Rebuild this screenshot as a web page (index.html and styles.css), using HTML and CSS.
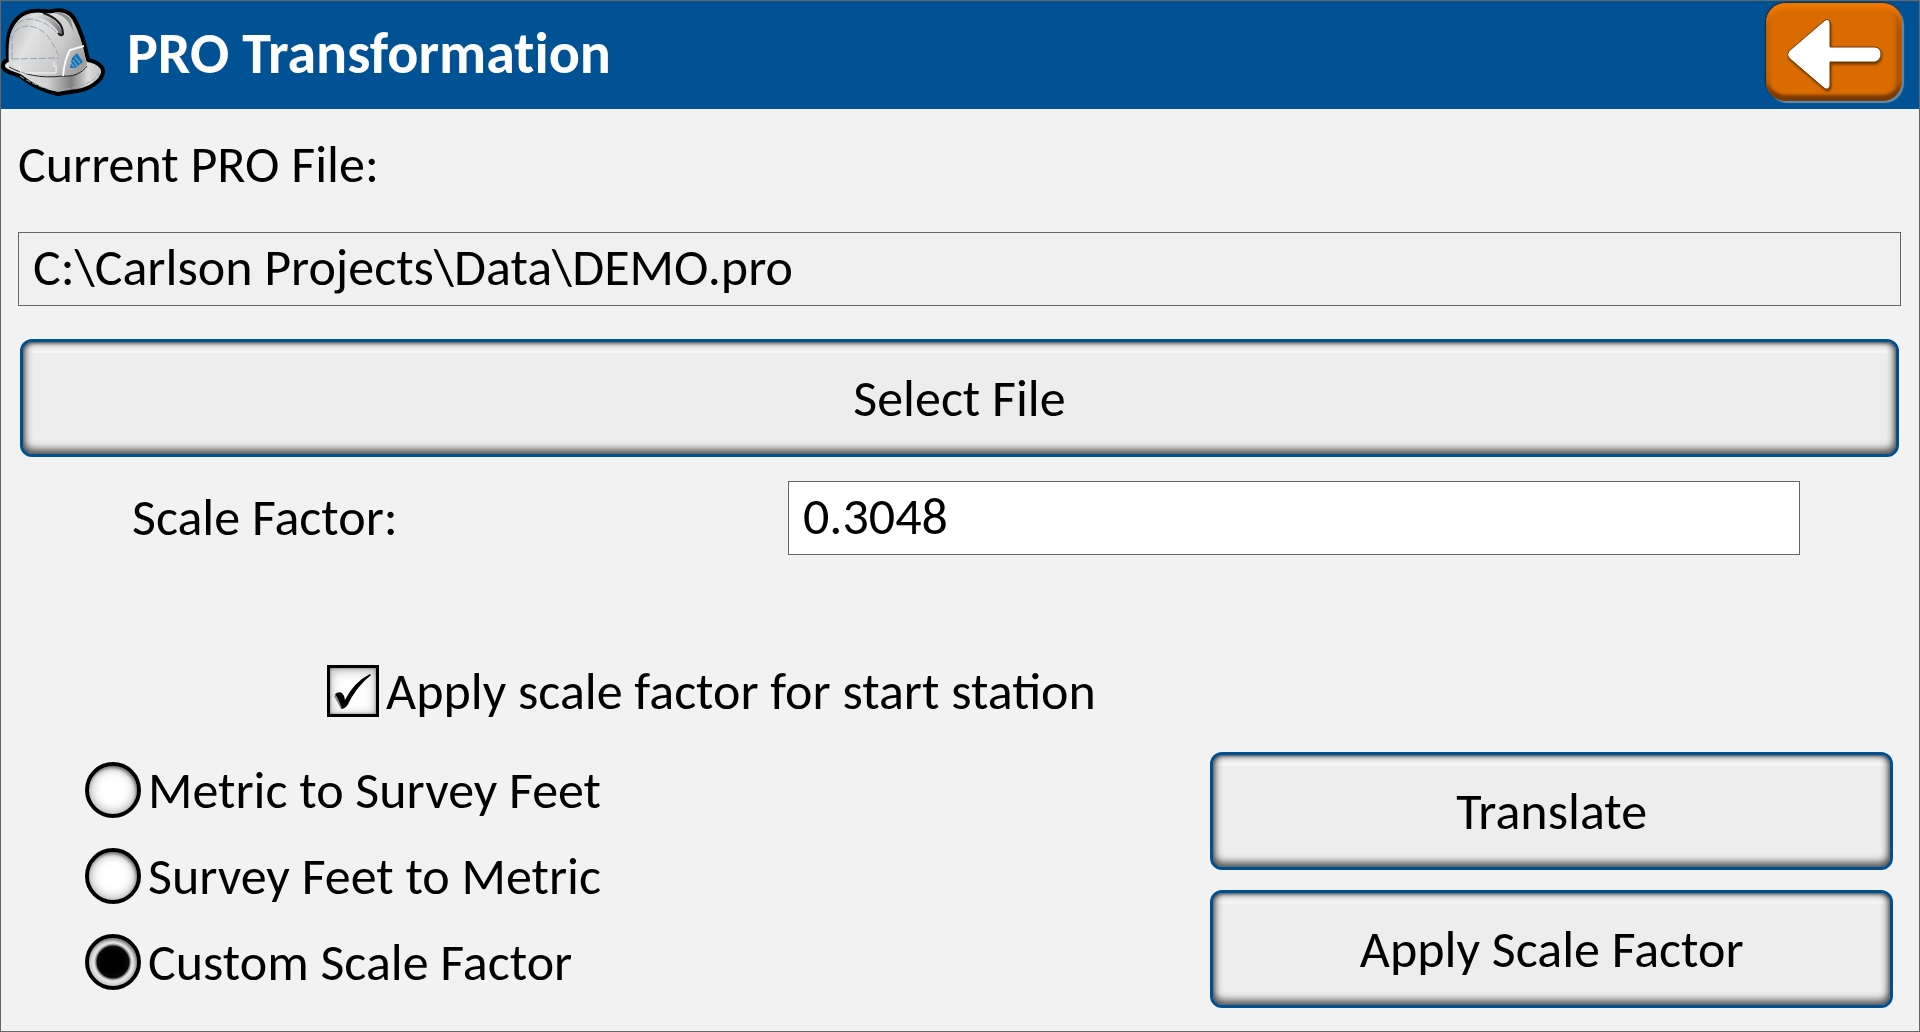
FILE: index.html
```html
<!DOCTYPE html>
<html lang="en">
<head>
<meta charset="utf-8">
<meta name="viewport" content="width=device-width, initial-scale=1">
<title>PRO Transformation</title>
<link rel="stylesheet" href="styles.css">
</head>
<body>
<div class="window">
  <header class="titlebar">
    <svg class="helmet" viewBox="1 3 106 100" aria-hidden="true">
      <defs>
        <linearGradient id="shell" x1="0" y1="0.2" x2="1" y2="0.6">
          <stop offset="0" stop-color="#b4b4b4"/>
          <stop offset="0.3" stop-color="#e2e2e2"/>
          <stop offset="0.7" stop-color="#cacaca"/>
          <stop offset="1" stop-color="#a0a0a0"/>
        </linearGradient>
        <linearGradient id="brim" x1="0" y1="0" x2="1" y2="0">
          <stop offset="0" stop-color="#e6e6e6"/>
          <stop offset="0.45" stop-color="#d0d0d0"/>
          <stop offset="0.68" stop-color="#808080"/>
          <stop offset="0.85" stop-color="#dcdcdc"/>
          <stop offset="1" stop-color="#bdbdbd"/>
        </linearGradient>
        <linearGradient id="ridge" x1="0" y1="0" x2="1" y2="1">
          <stop offset="0" stop-color="#eeeeee"/>
          <stop offset="0.5" stop-color="#a8a8a8"/>
          <stop offset="1" stop-color="#5e5e5e"/>
        </linearGradient>
      </defs>
      <path d="M8 60C7 44 7 29 17 19C24 11 33 10 43 11Q48 12 52 11C61 9 69 11 74 18C80 29 85 44 88 60C98 62 104 67 103 73C101 82 89 89 77 91C69 92 64 93 58 94C42 91 30 84 20 76C12 73 3 71 3 66C3 63 5 61 8 60Z" fill="url(#brim)" stroke="#000" stroke-width="4" stroke-linejoin="round"/>
      <path d="M9 66C8 46 8 31 18 21C24 14 32 12 42 13Q49 14 54 13C61 12 68 13 72 20C79 32 83 48 87 64C82 73 73 77 63 76C44 79 20 74 9 66Z" fill="url(#shell)"/>
      <path d="M34 14C48 13 59 21 64 35Q61 38 59 33C54 23 42 16 29 17Z" fill="url(#ridge)"/>
      <path d="M43 13C55 17 63 24 63 34Q61 37 58 33" fill="none" stroke="#191919" stroke-width="2"/>
      <path d="M54 13C65 15 70 23 74 33L71 20C67 14 60 12 54 13Z" fill="#8d8d8d"/>
      <path d="M10 39C12 22 25 17 36 20C45 22 51 27 57 33M12 59V38C14 28 25 24 34 27C47 31 53 43 59 56M12 59L59 58" fill="none" stroke="#8fa6ba" stroke-width="1" stroke-dasharray="7 2"/>
      <path d="M9 67C22 74 41 79 62 76C74 77 82 73 87 66" fill="none" stroke="#222" stroke-width="1"/>
      <path d="M20 76C34 85 45 89 57 91C75 88 94 84 99 73" fill="none" stroke="#9aabb8" stroke-width="1" stroke-dasharray="5 2"/>
      <path d="M63 76C64 65 66 57 70 50L84 46" fill="none" stroke="#fafafa" stroke-width="2"/>
      <path d="M19 66L21 73H56V65M54 62V67" fill="none" stroke="#f8f8f8" stroke-width="1"/>
      <path d="M77 53L83 62L75 68H70L72 58Z" fill="#1276b9"/>
      <path d="M75 57L80 63M73 60L77 66M71 63L74 67" stroke="#c3d7e3" stroke-width="0.7"/>
    </svg>
    <h1 class="title">PRO Transformation</h1>
    <button class="back" type="button" aria-label="Back">
      <svg class="arrow" viewBox="0 0 94 72" aria-hidden="true">
        <path d="M2 33L37 3Q42 -1 43 5V29H88Q94 30 94 36T88 44H43V68Q41 73 37 70L2 40Q-1 37 2 33Z" fill="#fff" stroke="#733900" stroke-width="1"/>
      </svg>
    </button>
  </header>

  <main class="form">
    <div class="file">
      <label class="text" for="path">Current PRO File:</label>
      <input class="field field-path" id="path" type="text" value="C:\Carlson Projects\Data\DEMO.pro" readonly>
      <div class="select"><button class="button" type="button">Select File</button></div>
    </div>

    <div class="scale">
      <label class="text" for="factor">Scale Factor:</label>
      <input class="field" id="factor" type="text" value="0.3048">
    </div>

    <label class="option option-start">
      <span class="tick">
        <input class="box" type="checkbox" checked>
        <svg class="mark" viewBox="0 0 52 52" aria-hidden="true">
          <path d="M7 31L10 28L16 38V44H14Z" fill="#888"/>
          <path d="M8 29Q12 26 15 28Q18 31 18 35Q27 17 43 9L44 10Q29 22 20 41Q18 43 15 44Q12 34 8 29Z" fill="#000"/>
        </svg>
      </span>
      <span class="text">Apply scale factor for start station</span>
    </label>

    <div class="lower">
      <div class="choices" role="radiogroup" aria-label="Conversion">
        <label class="option"><input class="radio" type="radio" name="mode"><span class="text">Metric to Survey Feet</span></label>
        <label class="option"><input class="radio" type="radio" name="mode"><span class="text">Survey Feet to Metric</span></label>
        <label class="option"><input class="radio" type="radio" name="mode" checked><span class="text">Custom Scale Factor</span></label>
      </div>
      <div class="actions">
        <button class="button" type="button">Translate</button>
        <button class="button" type="button">Apply Scale Factor</button>
      </div>
    </div>
  </main>
</div>
</body>
</html>
```

FILE: styles.css
```css
* {
  box-sizing: border-box;
}

body {
  margin: 0;
  background: #f2f2f2;
  color: #000;
  font: 52px/60px Carlito, Lato, "Open Sans", sans-serif;
}

button,
input {
  margin: 0;
  font: inherit;
  color: inherit;
}

.window {
  min-height: 100vh;
  border: 1px solid #666;
}

.titlebar {
  display: flex;
  align-items: flex-start;
  height: 108px;
  padding: 2px 17px 0 0;
  background: #005295;
}

.helmet {
  width: 106px;
  height: 100px;
  flex: none;
}

.title {
  flex: 1;
  margin: 0;
  padding-left: 20px;
  font-size: 58px;
  line-height: 102px;
  font-weight: 700;
  font-variant-ligatures: none;
  color: #fff;
}

.back {
  display: grid;
  place-items: center;
  width: 136px;
  height: 98px;
  padding: 3px 0 0;
  border: 0;
  border-radius: 20px;
  background: #d96b00;
  box-shadow:
    inset 0 6px 4px #ee7800,
    inset 0 -6px 3px #7a3900,
    inset -5px 0 5px #9c4c00,
    inset 3px 0 4px #b85b00,
    2px 2px 1px #5f8db0,
    -1px -1px 2px #1b2c3c;
}

.arrow {
  width: 94px;
  height: 72px;
  filter: drop-shadow(1px 2px 1px #733900);
}

.file {
  display: flex;
  flex-direction: column;
  padding: 25px 18px 0 17px;
}

.text {
  white-space: nowrap;
}

.field {
  width: 100%;
  height: 74px;
  padding: 0 14px 4px;
  border: 1px solid #666;
  border-radius: 0;
  background: #fff;
}

.field-path {
  margin: 38px 0 33px;
  background: #f0f0f0;
}

.select {
  display: flex;
  padding: 0 2px;
}

.button {
  width: 100%;
  height: 118px;
  padding: 0;
  border: 3px solid #00508f;
  border-radius: 12px;
  background: linear-gradient(#f5f5f5 11px, #ededed 11px);
  box-shadow:
    inset 0 1px 3px #555,
    inset 0 -4px 8px #555,
    inset 0 0 8px #666;
}

.scale {
  display: grid;
  grid-template-columns: 656fr 1012fr;
  align-items: center;
  padding: 24px 119px 0 131px;
}

.scale .text {
  padding-bottom: 2px;
}

.option {
  display: flex;
  align-items: center;
  gap: 7px;
}

.option-start {
  padding: 106px 0 26px 17%;
}

.tick {
  display: grid;
  width: 52px;
  height: 52px;
}

.box,
.mark {
  grid-area: 1 / 1;
  width: 52px;
  height: 52px;
}

.box {
  appearance: none;
  border: 3px solid #000;
  background: #fff;
  box-shadow: inset 0 0 3px #777, inset 0 2px 12px #aaa;
}

.mark {
  pointer-events: none;
}

.lower {
  display: grid;
  grid-template-columns: 1210fr 683fr;
  padding-right: 26px;
}

.choices {
  display: grid;
  grid-auto-rows: 86px;
  padding-left: 84px;
}

.radio {
  appearance: none;
  flex: none;
  width: 56px;
  height: 56px;
  border: 4px solid #000;
  border-radius: 50%;
  background: #fff;
  box-shadow: inset -1px 2px 3px #777, inset 0 0 12px #999;
}

.radio:checked {
  background: radial-gradient(circle, #000 16px, #777 17px, #fff 19px);
}

.actions {
  display: flex;
  flex-direction: column;
  gap: 20px;
  padding-top: 5px;
}
```
